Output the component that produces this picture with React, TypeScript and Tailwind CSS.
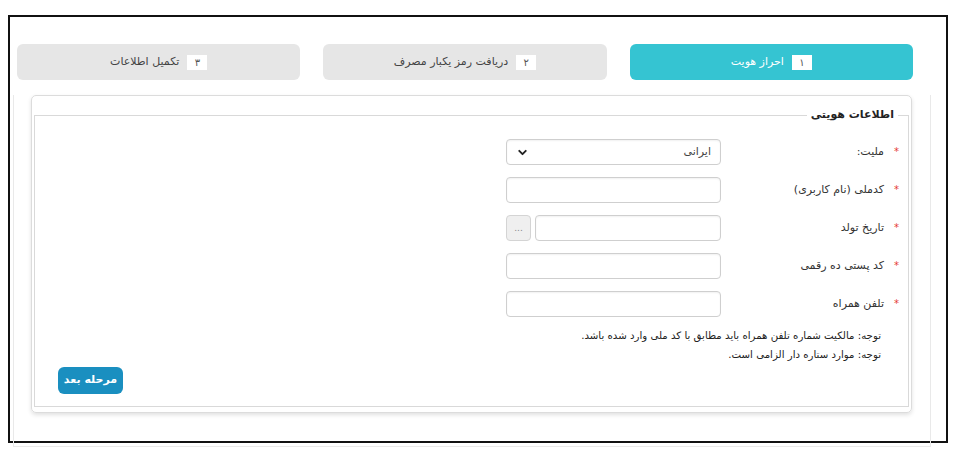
import { ChevronDown } from "lucide-react";

const font = { fontFamily: '"DejaVu Sans", "Noto Sans", sans-serif' };

const tabs = [
  { num: "۱", title: "احراز هویت", active: true },
  { num: "۲", title: "دریافت رمز یکبار مصرف", active: false },
  { num: "۳", title: "تکمیل اطلاعات", active: false },
];

const fields = [
  { label: "ملیت:", kind: "select" },
  { label: "کدملی (نام کاربری)", kind: "text" },
  { label: "تاریخ تولد", kind: "date" },
  { label: "کد پستی ده رقمی", kind: "text" },
  { label: "تلفن همراه", kind: "text" },
];

const inputCls =
  "h-[26px] rounded-[4px] border border-[#cfcfcf] bg-white shadow-[inset_0_1px_2px_rgba(0,0,0,0.06)]";

const Field = ({ label, kind }: { label: string; kind: string }) => (
  <div className="flex h-[26px] items-center">
    <div className="flex w-[187px] items-center pr-[9px]">
      <span className="w-[6px] text-[10px] leading-none text-[#e53935]">*</span>
      <span className="mr-[9px] text-[11px] text-[#333]">{label}</span>
    </div>
    {kind === "select" && (
      <div className={`${inputCls} flex w-[215px] items-center justify-between px-[9px]`}>
        <span className="text-[11px] text-[#444]">ایرانی</span>
        <ChevronDown size={13} strokeWidth={3.5} className="text-[#222]" />
      </div>
    )}
    {kind === "text" && <div className={`${inputCls} w-[215px]`} />}
    {kind === "date" && (
      <div className="flex w-[215px] gap-[4px]">
        <div className={`${inputCls} flex-1`} />
        <div className="flex h-[26px] w-[25px] items-center justify-center rounded-[4px] border border-[#d4d4d4] bg-[#efefef] text-[9px] leading-none text-[#888]">
          ...
        </div>
      </div>
    )}
  </div>
);

export default function App() {
  return (
    <div className="h-[459px] w-[958px] bg-white pl-[8px] pt-[15px]" style={font}>
      <div className="h-[428px] w-[940px] border-2 border-[#111]">
        <div dir="rtl" className="ml-[7px] mt-[27px] grid h-[36px] w-[896px] grid-cols-3 gap-[23px]">
          {tabs.map((t) => (
            <div
              key={t.num}
              className={`flex items-center justify-center gap-[8px] rounded-[6px] ${
                t.active ? "bg-[#35c4d2] text-white" : "bg-[#e6e6e6] text-[#444]"
              }`}
            >
              <span className="flex h-[15px] w-[20px] items-center justify-center bg-white text-[10px] text-[#555]">
                {t.num}
              </span>
              <span className="text-[11px]">{t.title}</span>
            </div>
          ))}
        </div>
        <div className="ml-[3px] h-[352px] w-[918px] border-x border-b border-[#e9e9e9]">
          <div className="ml-[17px] mt-[15px] h-[318px] w-[881px] rounded-[5px] border border-[#dcdcdc] px-[2px] pb-[5px] pt-[11px] shadow-[0_2px_4px_rgba(0,0,0,0.12)]">
            <fieldset dir="rtl" className="h-[300px] border border-[#d9d9d9]">
              <legend className="mr-[10px] px-[4px] text-[11px] font-bold leading-[16px] text-[#222]">
                اطلاعات هویتی
              </legend>
              <div className="mt-[16px] flex flex-col gap-[12px]">
                {fields.map((f) => (
                  <Field key={f.label} label={f.label} kind={f.kind} />
                ))}
              </div>
              <div className="mr-[27px] mt-[9px] text-[10.2px] leading-[19px] text-[#222]">
                <p>توجه: مالکیت شماره تلفن همراه باید مطابق با کد ملی وارد شده باشد.</p>
                <p>توجه: موارد ستاره دار الزامی است.</p>
              </div>
              <div className="ml-[23px] mt-[3px] flex justify-end">
                <button className="h-[27px] w-[65px] rounded-[6px] bg-[#1a8fc0] text-[11px] font-bold text-white">
                  مرحله بعد
                </button>
              </div>
            </fieldset>
          </div>
        </div>
      </div>
    </div>
  );
}
